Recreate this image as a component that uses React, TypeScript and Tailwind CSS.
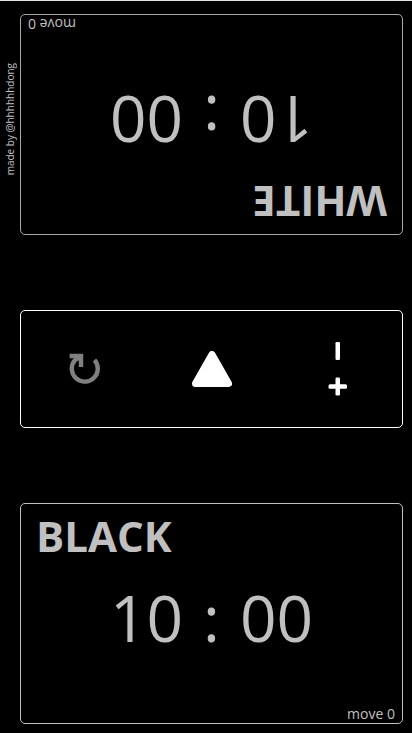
type PlayerProps = { name: string; minutes: string; seconds: string; moves: number; flipped?: boolean };

function PlayerClock({ name, minutes, seconds, moves, flipped = false }: PlayerProps) {
  return (
    <button
      type="button"
      className={`flex h-[221px] w-full flex-col rounded-[5px] border text-[#c0c0c0] ${flipped ? "rotate-180 border-[#a8a8a8]" : "border-[#c0c0c0]"}`}
    >
      <span className="w-full px-[15px] pt-1 text-left text-[42px] leading-[56px] font-bold">{name}</span>
      <span className="flex w-full justify-center gap-5 pt-[6px] text-[64px] leading-[96px]">
        <span>{minutes}</span>
        <span>:</span>
        <span>{seconds}</span>
      </span>
      <span className="mt-auto w-full px-[7px] text-right text-[14px] leading-[18px]">move {moves}</span>
    </button>
  );
}

function RestartIcon() {
  return (
    <svg width="36" height="36" viewBox="0 0 36 36" fill="none" stroke="#808080" strokeWidth="4.4" aria-hidden="true">
      <path d="M27.5 9A13 13 0 1 1 7.5 9.7L13 5" />
      <path d="M2.6 5H14V16" />
      <path d="M7 5H14V12Z" fill="#808080" stroke="none" />
    </svg>
  );
}

function TriangleIcon() {
  return (
    <svg width="40" height="36" viewBox="0 0 40 36" fill="#fff" stroke="#fff" strokeWidth="7" strokeLinejoin="round" aria-hidden="true">
      <path d="M20 3.5L36.5 32.5H3.5Z" />
    </svg>
  );
}

function AdjustIcon() {
  return (
    <svg width="22" height="54" viewBox="0 0 22 54" fill="#fff" aria-hidden="true">
      <rect x="7.5" y="0" width="4.5" height="18" rx="1.3" />
      <rect x="7.5" y="35.5" width="4.5" height="18" rx="1.3" />
      <rect x="0.5" y="42.3" width="18.5" height="4.4" rx="1.5" />
    </svg>
  );
}

export default function App() {
  return (
    <div className="flex min-h-screen border-t border-[#dfe3e3] bg-black pt-[13px] pr-[9px] pb-[9px] font-['Open_Sans','Noto_Sans',sans-serif]">
      <aside className="flex h-[210px] w-5 shrink-0 items-center justify-center">
        <span className="rotate-180 text-[10px] leading-5 text-[#c0c0c0] [writing-mode:vertical-rl]">made by @hhhhhhdong</span>
      </aside>
      <main className="flex grow flex-col justify-between">
        <PlayerClock name="WHITE" minutes="10" seconds="00" moves={0} flipped />
        <section className="grid h-[118px] grid-cols-3 rounded-[5px] border border-white">
          <button type="button" aria-label="Restart" className="flex items-center justify-center">
            <RestartIcon />
          </button>
          <button type="button" aria-label="Start" className="flex items-center justify-center">
            <TriangleIcon />
          </button>
          <button type="button" aria-label="Adjust time" className="flex items-center justify-center">
            <AdjustIcon />
          </button>
        </section>
        <PlayerClock name="BLACK" minutes="10" seconds="00" moves={0} />
      </main>
    </div>
  );
}
